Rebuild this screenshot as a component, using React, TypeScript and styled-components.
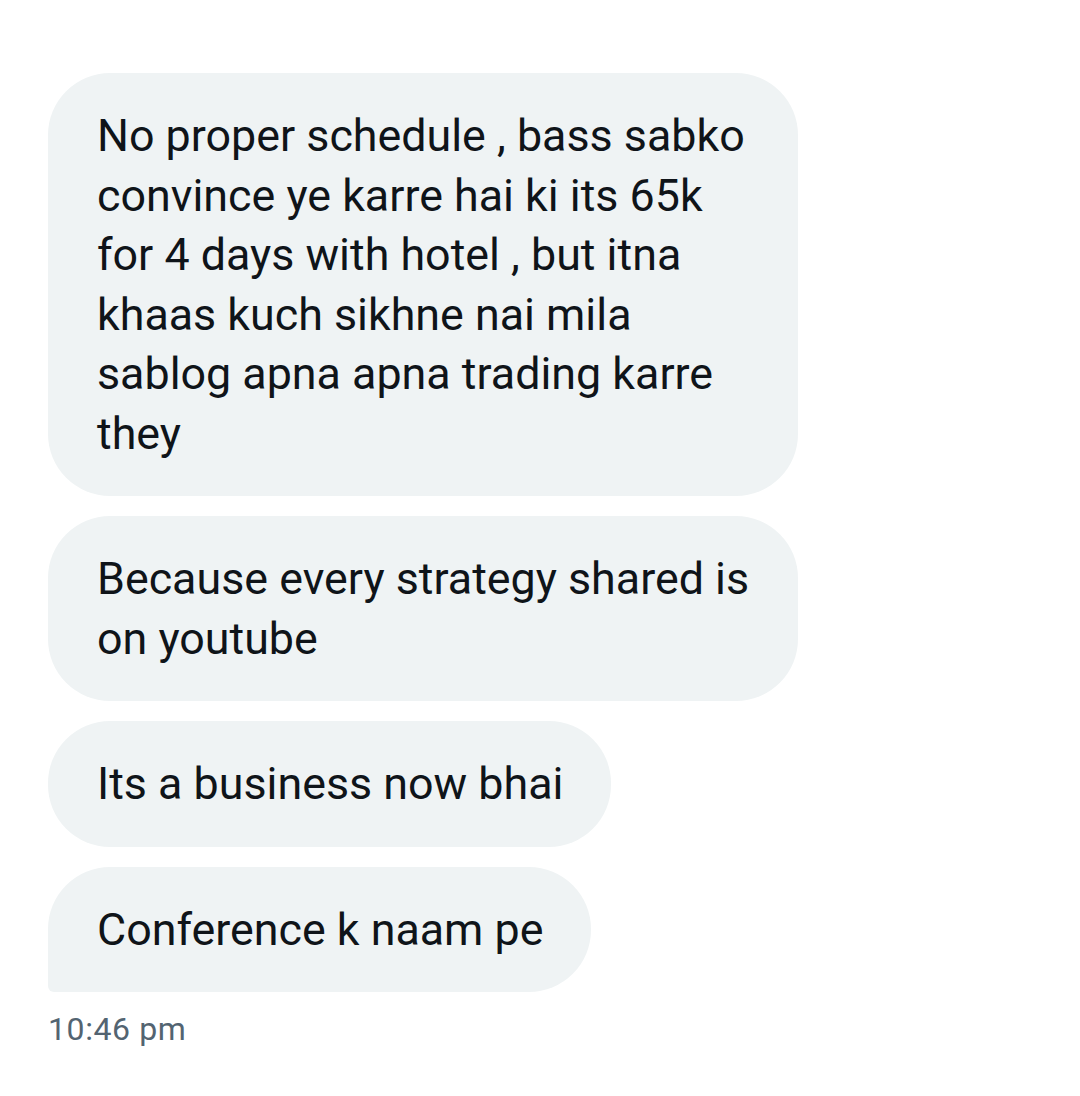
import React from "react";
import styled, { createGlobalStyle } from "styled-components";

const Global = createGlobalStyle`
  html, body { margin: 0; padding: 0; background: #ffffff; }
  body { font-family: Roboto, "Noto Sans", "Liberation Sans", sans-serif; }
`;

const Thread = styled.div`
  display: flex;
  flex-direction: column;
  align-items: flex-start;
  gap: 20px;
  padding: 73px 0 0 48px;
  width: 1032px;
  box-sizing: border-box;
`;

const Bubble = styled.div<{ $last?: boolean }>`
  box-sizing: border-box;
  max-width: 750px;
  padding: 33px 48px 33px 49px;
  background: #eff3f4;
  color: #0f1419;
  font-size: 44.8px;
  line-height: 59.5px;
  letter-spacing: 0;
  border-radius: 62px;
  border-bottom-left-radius: ${(p) => (p.$last ? "6px" : "62px")};
`;

const Time = styled.div`
  margin-top: -3px;
  color: #536471;
  font-size: 32px;
  letter-spacing: 0.6px;
  line-height: 40px;
`;

export default function App() {
  return (
    <>
      <Global />
      <Thread>
        <Bubble>
          No proper schedule , bass sabko convince ye karre hai ki its 65k for 4 days with hotel , but itna khaas kuch sikhne nai mila sablog apna apna trading karre they
        </Bubble>
        <Bubble>Because every strategy shared is on youtube</Bubble>
        <Bubble>Its a business now bhai</Bubble>
        <Bubble $last>Conference k naam pe</Bubble>
        <Time>10:46 pm</Time>
      </Thread>
    </>
  );
}
